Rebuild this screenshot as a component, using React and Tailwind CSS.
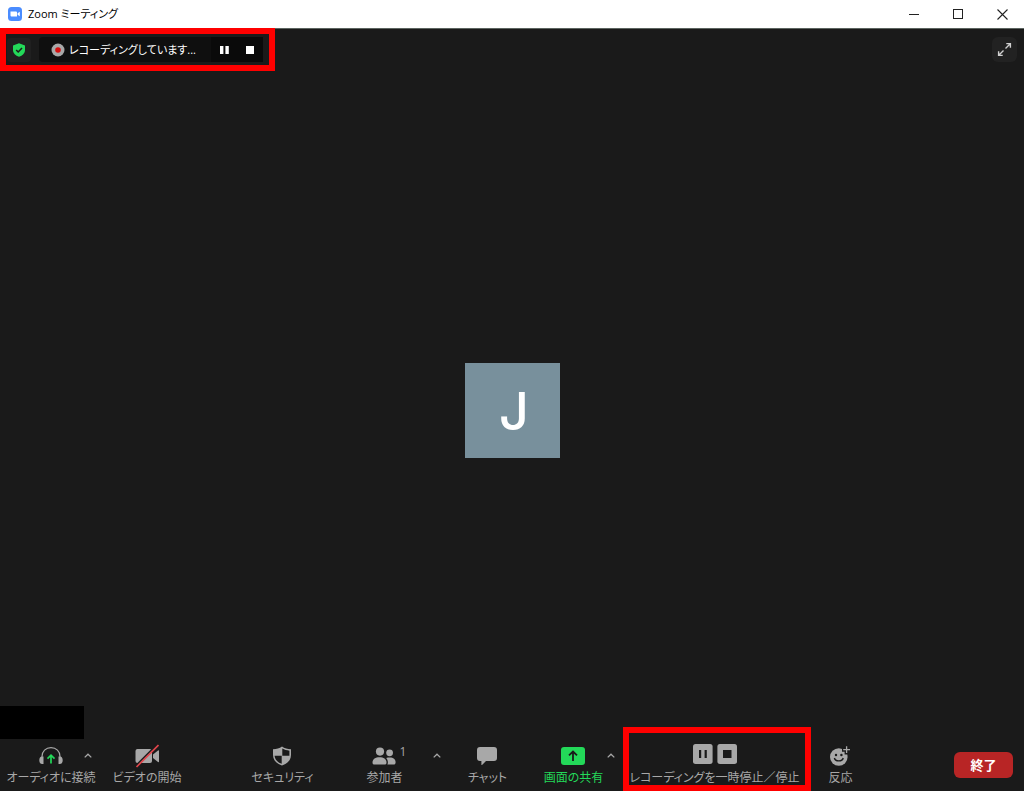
import React, { useState } from "react";

const ShieldCheckIcon = () => (
  <svg width="14" height="14" viewBox="0 0 14 14">
    <path d="M7 0.3 L13 2.4 V7 C13 10.2 10.4 12.6 7 13.8 C3.6 12.6 1 10.2 1 7 V2.4 Z" fill="#23d959" />
    <path d="M4.2 7 L6.2 9 L10 5" fill="none" stroke="#1a1a1a" strokeWidth="1.5" />
  </svg>
);

const HeadphonesIcon = () => (
  <svg width="24" height="20" viewBox="0 0 24 20">
    <path d="M3 12 V10.5 C3 5.2 6.8 1.7 12 1.7 S21 5.2 21 10.5 V12" fill="none" stroke="#a8a8a8" strokeWidth="1.2" />
    <path d="M4.5 10.5 V18 H3 C1.3 18 0.3 16.5 0.3 14.2 S1.3 10.5 3 10.5 Z M19.5 10.5 V18 H21 C22.7 18 23.7 16.5 23.7 14.2 S22.7 10.5 21 10.5 Z" fill="#a8a8a8" />
    <path d="M12 17.5 V9.5 M8.5 12.6 L12 9.2 L15.5 12.6" fill="none" stroke="#23d959" strokeWidth="1.7" />
  </svg>
);

const VideoOffIcon = () => (
  <svg width="24" height="24" viewBox="0 0 24 24">
    <rect x="0.5" y="5" width="16.5" height="14" rx="2" fill="#a8a8a8" />
    <path d="M18 10.5 L23 6.5 Q24 6 24 7 V17.5 Q24 18.5 23 18 L18 14 Z" fill="#a8a8a8" />
    <path d="M0.5 22 L22.5 0" stroke="#1a1a1a" strokeWidth="1.6" />
    <path d="M1.5 23 L23.5 1" stroke="#e0454b" strokeWidth="1.7" />
  </svg>
);

const SecurityIcon = () => (
  <svg width="20" height="20" viewBox="0 0 20 20">
    <path d="M10 0.4 C12.5 2.2 15.5 3 19 3.2 V9 C19 14 15.5 17.6 10 19.6 C4.5 17.6 1 14 1 9 V3.2 C4.5 3 7.5 2.2 10 0.4 Z" fill="#a8a8a8" />
    <path d="M10.3 2.6 C12.4 3.9 14.8 4.5 17.4 4.7 V9.7 H10.3 Z M9.7 9.7 V17.8 C5.5 16.1 2.8 13.4 2.6 9.7 Z" fill="#1a1a1a" />
  </svg>
);

const ParticipantsIcon = () => (
  <svg width="24" height="18" viewBox="0 0 24 18">
    <g fill="#a8a8a8">
      <circle cx="8" cy="4.6" r="4.1" />
      <circle cx="17.6" cy="5.8" r="3.4" />
      <path d="M0.5 15.5 C0.5 12 3.5 10.3 7.5 10.3 S14.5 12 14.5 15.5 C14.5 17 13.8 17.6 12.6 17.6 H2.4 C1.2 17.6 0.5 17 0.5 15.5 Z" />
      <path d="M14.2 11 C15.2 10.6 16.5 10.5 17.8 10.5 C21.4 10.5 23.6 12.3 23.6 15.2 C23.6 16.8 22.9 17.6 21.6 17.6 H15.4 C16.4 15.4 15.8 12.8 14.2 11 Z" />
    </g>
  </svg>
);

const ChatIcon = () => (
  <svg width="20" height="18" viewBox="0 0 20 18">
    <path d="M3 0 H17 Q20 0 20 3 V11 Q20 14 17 14 H9 L5 18 Q4.4 18.2 4.4 17.4 V14 H3 Q0 14 0 11 V3 Q0 0 3 0 Z" fill="#a8a8a8" />
  </svg>
);

const ShareIcon = () => (
  <svg width="24" height="18" viewBox="0 0 24 18">
    <rect width="24" height="18" rx="3" fill="#23d959" />
    <path d="M12 14 V5 M8 8.4 L12 4.6 L16 8.4" fill="none" stroke="#1a1a1a" strokeWidth="1.8" />
  </svg>
);

const RecordControlsIcon = () => (
  <svg width="44" height="20" viewBox="0 0 44 20" className="shrink-0">
    <rect width="19.6" height="20" rx="2.5" fill="#a8a8a8" />
    <rect x="24.4" width="19.6" height="20" rx="2.5" fill="#a8a8a8" />
    <path d="M6 6 H8.2 V14 H6 Z M11.6 6 H13.8 V14 H11.6 Z M30 6 H38.5 V14 H30 Z" fill="#1a1a1a" />
  </svg>
);

const ReactionIcon = () => (
  <svg width="20" height="20" viewBox="0 0 20 20">
    <circle cx="8.8" cy="11" r="8.8" fill="#a8a8a8" />
    <path d="M16.6 -1 V8.5 M12 3.7 H21" stroke="#1a1a1a" strokeWidth="4" />
    <path d="M16.6 0.3 V7 M13.2 3.7 H20" stroke="#a8a8a8" strokeWidth="1.3" />
    <circle cx="6" cy="9" r="1.2" fill="#1a1a1a" />
    <circle cx="11.4" cy="9" r="1.2" fill="#1a1a1a" />
    <path d="M4.4 12 C5.2 15.8 12.4 15.8 13.2 12" fill="none" stroke="#1a1a1a" strokeWidth="1.4" />
  </svg>
);

const Caret = ({ label, className }) => (
  <button type="button" aria-label={label} className={`absolute top-2 flex h-4 w-3 items-center justify-center ${className}`}>
    <svg width="8" height="5" viewBox="0 0 8 5">
      <path d="M0.7 4.4 L4 1.2 L7.3 4.4" fill="none" stroke="#a8a8a8" strokeWidth="1.3" />
    </svg>
  </button>
);

const ToolItem = ({ icon, label, className, labelClass = "text-[#a8a8a8]", count, children }) => (
  <div className={`relative flex h-[52px] justify-center ${className}`}>
    <button type="button" className="flex flex-col items-center pt-[5px]">
      <span className="relative flex h-6 items-center">
        {icon}
        {count && (
          <span className="absolute -right-2.5 top-0 text-xs leading-4 text-[#a8a8a8]">{count}</span>
        )}
      </span>
      <span className={`whitespace-nowrap text-xs leading-5 ${labelClass}`}>{label}</span>
    </button>
    {children}
  </div>
);

const TitleBar = () => (
  <header className="flex h-[29px] shrink-0 items-center justify-between border-b border-[#5c6460] bg-white text-black">
    <div className="flex items-center gap-1.5 pl-2">
      <svg width="14" height="14" viewBox="0 0 14 14">
        <rect width="14" height="14" rx="3.5" fill="#4a8cff" />
        <path d="M2.5 4.5 H8 Q9 4.5 9 5.5 V9.5 H3.5 Q2.5 9.5 2.5 8.5 Z M9.6 6.2 L11.8 4.7 V9.3 L9.6 7.8 Z" fill="#fff" />
      </svg>
      <h1 className="text-[11px] leading-4">Zoom ミーティング</h1>
    </div>
    <div className="flex">
      <button type="button" aria-label="最小化" className="flex h-7 w-11 items-center justify-center">
        <svg width="11" height="11" viewBox="0 0 11 11"><path d="M0 5.5 H10" stroke="#222" /></svg>
      </button>
      <button type="button" aria-label="最大化" className="flex h-7 w-11 items-center justify-center">
        <svg width="11" height="11" viewBox="0 0 11 11"><rect x="0.5" y="0.5" width="9" height="9" fill="none" stroke="#222" /></svg>
      </button>
      <button type="button" aria-label="閉じる" className="flex h-7 w-11 items-center justify-center">
        <svg width="11" height="11" viewBox="0 0 11 11"><path d="M0.5 0.5 L10.5 10.5 M10.5 0.5 L0.5 10.5" stroke="#222" strokeWidth="1.1" /></svg>
      </button>
    </div>
  </header>
);

const RecordingStatus = ({ paused, onPause }) => (
  <div className="-mt-px flex items-center gap-2 border-[6px] border-[#ff0000] py-[3px] pl-px pr-1.5">
    <button type="button" aria-label="ミーティング情報" className="flex size-6 items-center justify-center rounded bg-[#202020]">
      <ShieldCheckIcon />
    </button>
    <div className="flex h-[25px] items-center rounded-sm bg-[#0f0f0f]">
      <div className="flex w-[172px] items-center gap-1 pl-3">
        <svg width="14" height="14" viewBox="0 0 14 14" className="shrink-0">
          <circle cx="7" cy="7" r="6.5" fill="#a8a8a8" />
          <circle cx="7" cy="7" r="2.8" fill="#d60f0f" />
        </svg>
        <span className="whitespace-nowrap text-[11px] leading-4 text-white">レコーディングしています...</span>
      </div>
      <button type="button" aria-label="一時停止" aria-pressed={paused} onClick={onPause} className="flex h-full w-[26px] items-center justify-center bg-[#0a0a0a]">
        <svg width="9" height="8" viewBox="0 0 9 8"><path d="M0 0 H3.4 V8 H0 Z M5.4 0 H8.8 V8 H5.4 Z" fill="#fff" /></svg>
      </button>
      <button type="button" aria-label="停止" className="flex h-full w-[26px] items-center justify-center bg-[#0a0a0a]">
        <svg width="8" height="8" viewBox="0 0 8 8"><rect width="8" height="8" fill="#fff" /></svg>
      </button>
    </div>
  </div>
);

const Toolbar = () => (
  <nav className="flex h-[52px] items-end">
    <ToolItem icon={<HeadphonesIcon />} label="オーディオに接続" className="w-[102px]">
      <Caret label="オーディオのオプション" className="right-2" />
    </ToolItem>
    <ToolItem icon={<VideoOffIcon />} label="ビデオの開始" className="w-[90px]" />
    <div className="flex flex-1 items-end justify-center">
      <ToolItem icon={<SecurityIcon />} label="セキュリティ" className="w-[104px]" />
      <ToolItem icon={<ParticipantsIcon />} label="参加者" count="1" className="w-[100px]">
        <Caret label="参加者のオプション" className="-right-2" />
      </ToolItem>
      <ToolItem icon={<ChatIcon />} label="チャット" className="w-[106px]" />
      <ToolItem icon={<ShareIcon />} label="画面の共有" labelClass="text-[#23d959]" className="w-[66px]">
        <Caret label="共有のオプション" className="-right-2.5" />
      </ToolItem>
      <button type="button" className="ml-4 flex h-16 w-[188px] flex-col items-center border-[6px] border-[#ff0000] pr-1 pt-[11px]">
        <RecordControlsIcon />
        <span className="mt-1.5 whitespace-nowrap text-xs leading-4 text-[#a8a8a8]">レコーディングを一時停止／停止</span>
      </button>
      <ToolItem icon={<ReactionIcon />} label="反応" className="w-[60px]" />
    </div>
    <div className="flex w-[115px] justify-end pb-[13px] pr-[11px]">
      <button type="button" className="h-[26px] w-[59px] rounded-md bg-[#b82525] text-[13px] font-bold leading-5 text-white">
        終了
      </button>
    </div>
  </nav>
);

const App = () => {
  const [paused, setPaused] = useState(false);

  return (
    <div className="flex min-h-screen flex-col bg-[#1a1a1a] font-['Open_Sans','Noto_Sans_CJK_JP',sans-serif] [font-feature-settings:'palt']">
      <TitleBar />
      <main className="grid flex-1 grid-cols-1 grid-rows-1">
        <div className="col-start-1 row-start-1 flex items-start justify-between self-start">
          <RecordingStatus paused={paused} onPause={() => setPaused(!paused)} />
          <button type="button" aria-label="全画面表示" className="mr-[7px] mt-2 flex size-[25px] items-center justify-center rounded-md bg-[#222222]">
            <svg width="15" height="15" viewBox="0 0 15 15">
              <path d="M8.5 6.5 L13 2 M9.3 1.6 H13.4 V5.7 M6.5 8.5 L2 13 M1.6 9.3 V13.4 H5.7" fill="none" stroke="#d0d0d0" strokeWidth="1.4" />
            </svg>
          </button>
        </div>
        <div className="col-start-1 row-start-1 flex size-[95px] items-center justify-center place-self-center bg-[#78909c] pl-1 pt-1 font-[Inter,sans-serif] text-[52px] font-medium leading-none text-white">
          J
        </div>
        <div className="col-start-1 row-start-1 self-end">
          <div className="h-[33px] w-[84px] bg-black" />
          <Toolbar />
        </div>
      </main>
    </div>
  );
};

export default App;
